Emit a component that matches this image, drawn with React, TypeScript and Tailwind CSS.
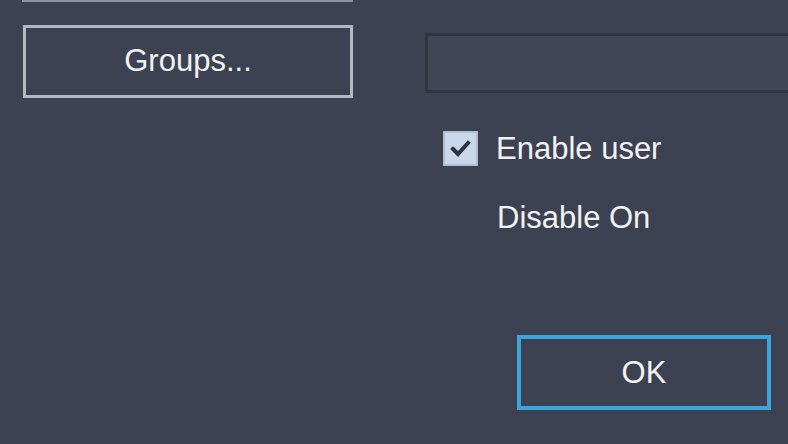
import React from 'react';

const font = { fontFamily: '"Liberation Sans", Arial, sans-serif' };

const CheckBox = ({ checked }: { checked: boolean }) => (
  <div className="w-[35px] h-[35px] border-2 border-[#aebdd3] bg-[#c9d7eb] flex items-center justify-center">
    {checked && (
      <svg width="31" height="31" viewBox="0 0 31 31">
        <polyline
          points="8,16 13,21 23,10"
          fill="none"
          stroke="#2a3243"
          strokeWidth="4"
          strokeLinecap="square"
        />
      </svg>
    )}
  </div>
);

export default function App() {
  return (
    <div
      className="w-[788px] h-[444px] overflow-hidden bg-[#3c4252] text-[#f2f2f2] text-[31px] flex"
      style={font}
    >
      {/* left column */}
      <div className="w-[353px] pl-[23px] flex flex-col shrink-0">
        <div className="h-[2px] w-[331px] -ml-[1px] bg-[#8d929c]" />
        <button className="mt-[23px] w-[330px] h-[73px] border-[3px] border-[#b3b7bf] flex items-center justify-center leading-none pb-[2px]">
          Groups...
        </button>
      </div>

      {/* right column */}
      <div className="flex-1 ml-[72px] flex flex-col">
        <div className="mt-[33px] h-[60px] -mr-[10px] border-[3px] border-[#30353f] bg-[#414756]" />

        <div className="mt-[38px] ml-[18px] flex items-center gap-[18px] h-[35px]">
          <CheckBox checked />
          <span className="leading-none">Enable user</span>
        </div>

        <div className="mt-[34px] ml-[72px] h-[35px] flex items-center">
          <span className="leading-none">Disable On</span>
        </div>

        <button className="mt-[100px] ml-[92px] w-[254px] h-[75px] border-[4px] border-[#3ba6dc] flex items-center justify-center leading-none">
          OK
        </button>
      </div>
    </div>
  );
}
